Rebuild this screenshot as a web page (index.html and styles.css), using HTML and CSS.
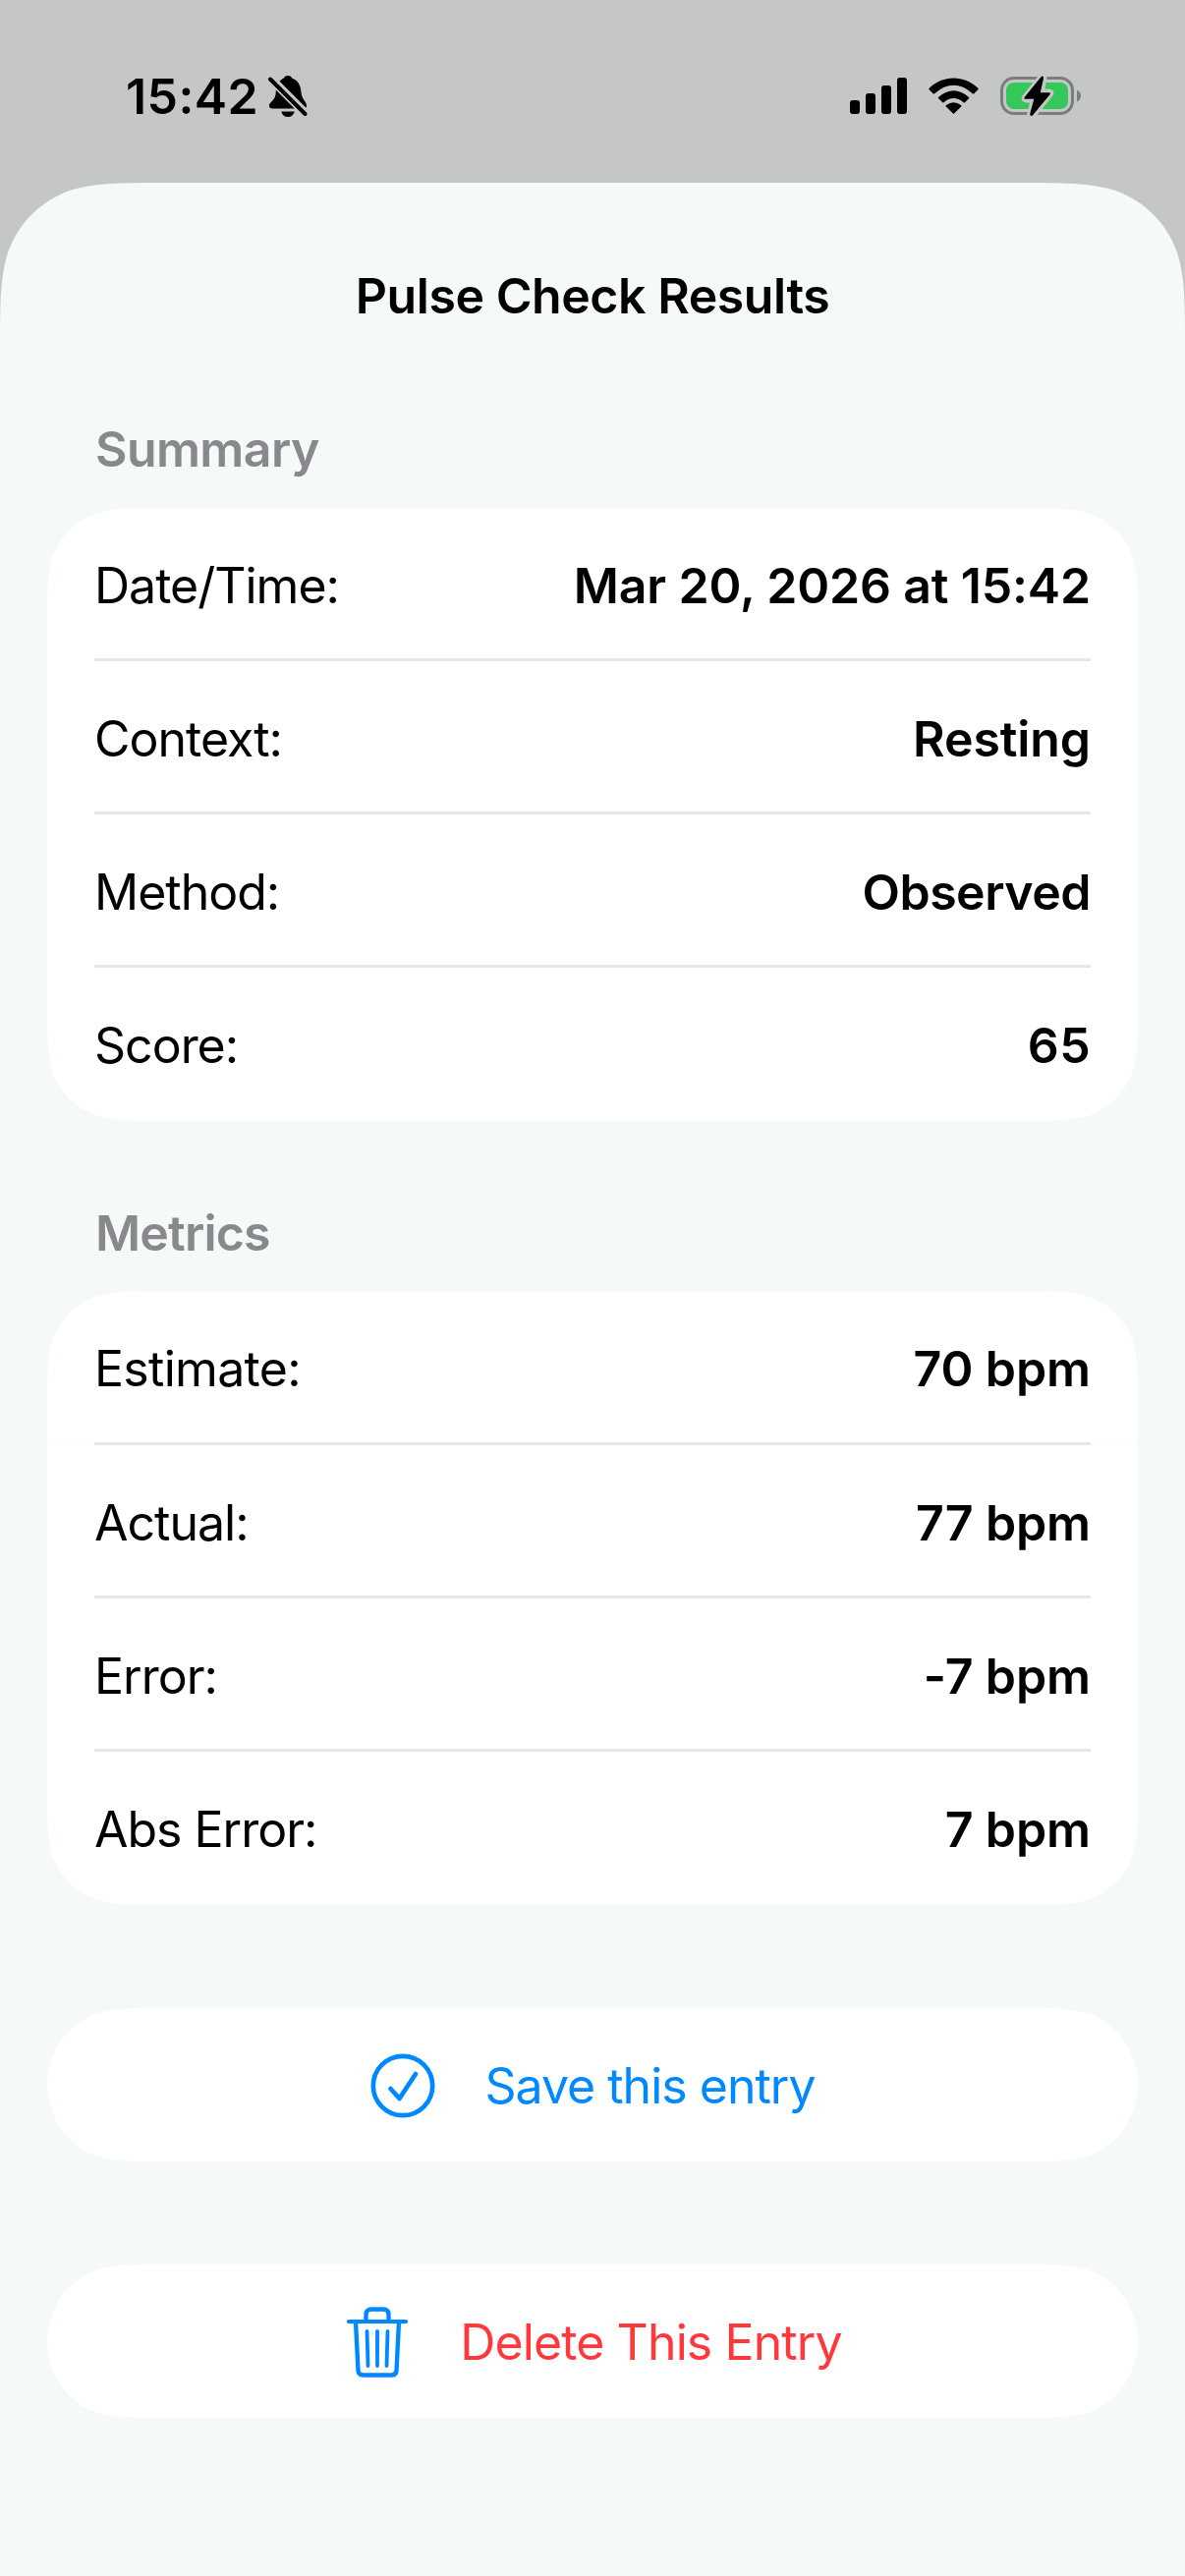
FILE: index.html
```html
<!DOCTYPE html>
<html lang="en">
<head>
<meta charset="utf-8">
<title>Pulse Check Results</title>
<link rel="stylesheet" href="styles.css">
</head>
<body>
<div class="screen">
  <header class="status-bar">
    <div class="status-left">
      <span class="clock">15:42</span>
      <svg class="bell" width="40" height="44" viewBox="0 0 40 44" aria-hidden="true">
        <path d="M1 31.500C1 28 7 26 7.600 19.500C8 9 12 5 16 3.500Q16.500 1 20 1Q23.500 1 24 3.500C30 5.500 33 10.500 33.500 18C34 25 39 27.500 39 31.500Q39 34.500 36 34.500H4Q1 34.500 1 31.500Z"/>
        <path d="M13.200 37.500H26.800Q25 43 20 43Q15 43 13.200 37.500Z"/>
        <path class="bell-gap" d="M0 1.500 41 42.500"/>
        <path class="bell-slash" d="M2 4.500 37.500 40"/>
      </svg>
    </div>
    <div class="status-right">
      <svg class="signal" width="58" height="37" viewBox="0 0 58 37" aria-hidden="true">
        <rect x="0" y="23" width="10" height="14" rx="3"/>
        <rect x="16" y="16" width="10" height="21" rx="3"/>
        <rect x="32" y="8" width="10" height="29" rx="3"/>
        <rect x="48" y="0" width="10" height="37" rx="3"/>
      </svg>
      <svg class="wifi" width="52" height="38" viewBox="0 0 52 38" aria-hidden="true">
        <path d="M25.500 37 33.200 29.400Q34 28.600 33 27.900Q25.500 22.600 18 27.900Q17 28.600 17.800 29.400Z"/>
        <path d="M10.200 21.300 14 25.100Q14.700 25.800 15.500 25.200Q25.500 16.800 35.500 25.200Q36.300 25.800 37 25.200L41 21.300Q41.700 20.600 41 19.900Q25.500 6.500 10 19.900Q9.300 20.600 10.200 21.300Z"/>
        <path d="M.7 12.300 4.600 16.200Q5.400 16.900 6.200 16.200Q25.500-.5 44.800 16.200Q45.600 16.900 46.400 16.200L50.300 12.300Q51.100 11.500 50.300 10.700C36-3 15-3 .7 10.700Q-.1 11.500 .7 12.300Z"/>
      </svg>
      <svg class="battery" width="83" height="42" viewBox="0 0 83 42" aria-hidden="true">
        <rect class="battery-shell" x="1.500" y="2.500" width="72" height="36" rx="12.500"/>
        <path class="battery-tip" d="M78 14.500Q82 16.500 82 20.500T78 26.500Z"/>
        <rect class="battery-level" x="6" y="7" width="63" height="27" rx="8"/>
        <path class="bolt-gap" d="M43 .5 25.500 22.500Q24.500 24 26.500 24H34.500L30.500 40.500Q32 41 33 40L50.500 18.500Q51.500 17 49.500 17H41.500L44 1.500Z"/>
        <path d="M43 .5Q42.300 .3 41.500 1.200L24.800 21.700Q23.600 23.700 25.800 23.700H34.300L30.300 38.500Q30 40.800 31.500 40.900Q32.500 40.900 33.300 40L50.300 19.500Q51.800 17.200 49.500 17.200H40.800L44 2.800Q44.200 .8 43 .5Z"/>
      </svg>
    </div>
  </header>

  <main class="sheet">
    <h1 class="title">Pulse Check Results</h1>

    <section class="group summary">
      <h2 class="heading">Summary</h2>
      <dl class="card">
        <div class="row"><dt>Date/Time:</dt><dd class="date">Mar 20, 2026 at 15:42</dd></div>
        <div class="row"><dt>Context:</dt><dd>Resting</dd></div>
        <div class="row"><dt>Method:</dt><dd class="word">Observed</dd></div>
        <div class="row"><dt>Score:</dt><dd class="number">65</dd></div>
      </dl>
    </section>

    <section class="group metrics">
      <h2 class="heading">Metrics</h2>
      <dl class="card">
        <div class="row"><dt class="estimate">Estimate:</dt><dd>70 bpm</dd></div>
        <div class="row"><dt>Actual:</dt><dd>77 bpm</dd></div>
        <div class="row"><dt>Error:</dt><dd>-7 bpm</dd></div>
        <div class="row"><dt>Abs Error:</dt><dd>7 bpm</dd></div>
      </dl>
    </section>

    <div class="actions">
      <button class="action save" type="button">
        <svg width="66" height="66" viewBox="0 0 66 66" aria-hidden="true">
          <circle cx="33" cy="33" r="30.200" stroke-width="4.700"/>
          <path d="M20.500 36 29.500 46 46 21" stroke-width="4.700"/>
        </svg>
        <span>Save this entry</span>
      </button>
      <button class="action delete" type="button">
        <svg width="62" height="72" viewBox="0 0 62 72" aria-hidden="true">
          <path d="M2 15H60" stroke-width="4.200"/>
          <path d="M19.500 14V8Q19.500 2.500 25 2.500H37Q42.500 2.500 42.500 8V14M9 15 11.500 65Q11.800 69.500 16.500 69.500H45.500Q50.200 69.500 50.500 65L53 15" stroke-width="4.400"/>
          <path d="M20.500 25 21.500 60M31 25V60M41.500 25 40.500 60" stroke-width="3.800"/>
        </svg>
        <span>Delete This Entry</span>
      </button>
    </div>
  </main>
</div>
</body>
</html>
```
FILE: styles.css
```css
* {
  box-sizing: border-box;
}

body,
h1,
h2,
dl,
dd {
  margin: 0;
}

body {
  background: #c4c7c6;
  color: #000;
  font-family: Inter, "Liberation Sans", sans-serif;
  font-size: 50px;
  line-height: 60px;
}

svg {
  display: block;
  flex: none;
}

.screen {
  display: flex;
  flex-direction: column;
  width: 1206px;
  height: 2622px;
  overflow: hidden;
}

.status-bar {
  display: flex;
  justify-content: space-between;
  height: 186px;
  padding: 68px 105px 0 128px;
}

.status-left,
.status-right {
  display: flex;
  align-items: flex-start;
}

.clock {
  width: 145px;
  font-weight: 600;
  letter-spacing: 0.4px;
  white-space: nowrap;
}

.bell {
  margin-top: 8px;
}

.bell-gap,
.bell-slash {
  fill: none;
  stroke: #c4c7c6;
  stroke-width: 9;
}

.bell-slash {
  stroke: #000;
  stroke-width: 4;
  stroke-linecap: round;
}

.signal {
  margin-top: 11px;
}

.wifi {
  margin: 11px 0 0 22px;
}

.battery {
  margin: 9px 0 0 21px;
}

.battery-shell {
  fill: none;
  stroke: #7b7d7c;
  stroke-width: 3;
}

.battery-tip {
  fill: #7b7d7c;
}

.battery-level {
  fill: #34c759;
}

.bolt-gap {
  fill: #c4c7c6;
  stroke: #c4c7c6;
  stroke-width: 7;
  stroke-linejoin: round;
}

/* The clip paths below give continuous-curvature corners. */
.sheet {
  flex: 1;
  padding: 85px 48px 0;
  background: #f5f9f8;
  clip-path: path("M0 169.700C0 120.800 0 96.400 8.300 70.100C18.800 41.400 41.400 18.800 70.100 8.300C96.400 0 120.800 0 169.700 0H1036.300C1085.200 0 1109.600 0 1135.900 8.300C1164.600 18.800 1187.200 41.400 1197.700 70.100C1206 96.400 1206 120.800 1206 169.700V2436H0Z");
}

.title {
  font-size: inherit;
  font-weight: 600;
  letter-spacing: -0.45px;
  text-align: center;
}

.summary {
  padding-top: 96px;
}

.metrics {
  padding-top: 84px;
}

.heading {
  padding-left: 49px;
  margin-bottom: 30px;
  color: #88898d;
  font-size: inherit;
  font-weight: 600;
  letter-spacing: -0.6px;
}

.metrics .heading {
  margin-bottom: 29px;
  letter-spacing: -0.8px;
}

.card {
  padding: 0 48px;
  background: #fff;
  clip-path: path("M0 119C0 84.900 0 67.700 5.800 49.300C13.200 29.100 29.100 13.200 49.300 5.800C67.700 0 84.900 0 119 0H991C1025.100 0 1042.300 0 1060.700 5.800C1080.900 13.200 1096.800 29.100 1104.200 49.300C1110 67.700 1110 84.900 1110 119V505C1110 539.100 1110 556.300 1104.200 574.700C1096.800 594.900 1080.900 610.800 1060.700 618.200C1042.300 624 1025.100 624 991 624H119C84.900 624 67.700 624 49.300 618.200C29.100 610.800 13.200 594.900 5.800 574.700C0 556.300 0 539.100 0 505Z");
}

.metrics .card {
  background: linear-gradient(#fafcfb, #fafcfb) 0 156px / 100% 1px no-repeat #fff;
  clip-path: path("M0 119C0 84.900 0 67.700 5.800 49.300C13.200 29.100 29.100 13.200 49.300 5.800C67.700 0 84.900 0 119 0H991C1025.100 0 1042.300 0 1060.700 5.800C1080.900 13.200 1096.800 29.100 1104.200 49.300C1110 67.700 1110 84.900 1110 119V506C1110 540.100 1110 557.300 1104.200 575.700C1096.800 595.900 1080.900 611.800 1060.700 619.200C1042.300 625 1025.100 625 991 625H119C84.900 625 67.700 625 49.300 619.200C29.100 611.800 13.200 595.900 5.800 575.700C0 557.300 0 540.100 0 506Z");
}

.row {
  display: flex;
  justify-content: space-between;
  align-items: center;
  height: 156px;
  padding-top: 5px;
  border-bottom: 3px solid #e6e6e6;
}

.metrics .row:first-child {
  height: 157px;
  padding-bottom: 1px;
}

.row:last-child {
  border-bottom-color: transparent;
}

dt {
  letter-spacing: -1px;
}

.estimate {
  letter-spacing: -0.7px;
}

dd {
  font-weight: 600;
  letter-spacing: -0.1px;
}

.date {
  letter-spacing: -0.15px;
}

.word {
  letter-spacing: -0.5px;
}

.number {
  letter-spacing: 0.4px;
}

.actions {
  display: flex;
  flex-direction: column;
  gap: 105px;
  padding-top: 105px;
}

.action {
  display: flex;
  align-items: center;
  justify-content: center;
  gap: 50px;
  height: 156px;
  padding: 1px 0 0 1px;
  border: 0;
  background: #fff;
  clip-path: path("M0 78C0 67.700 2 59 5.800 49.300C13.200 29.100 29.100 13.200 49.300 5.800C67.700 0 84.900 0 119 0H991C1025.100 0 1042.300 0 1060.700 5.800C1080.900 13.200 1096.800 29.100 1104.200 49.300C1108 59 1110 67.700 1110 78C1110 88.300 1108 97 1104.200 106.700C1096.800 126.900 1080.900 142.800 1060.700 150.200C1042.300 156 1025.100 156 991 156H119C84.900 156 67.700 156 49.300 150.200C29.100 142.800 13.200 126.900 5.800 106.700C2 97 0 88.300 0 78Z");
  color: #0088ff;
  font: inherit;
  letter-spacing: -1px;
}

.action svg {
  fill: none;
  stroke: #0088ff;
  stroke-linecap: round;
  stroke-linejoin: round;
}

.action.delete {
  gap: 53px;
  padding-left: 4px;
  letter-spacing: -0.9px;
}

.delete span {
  color: #ff383c;
}
```
